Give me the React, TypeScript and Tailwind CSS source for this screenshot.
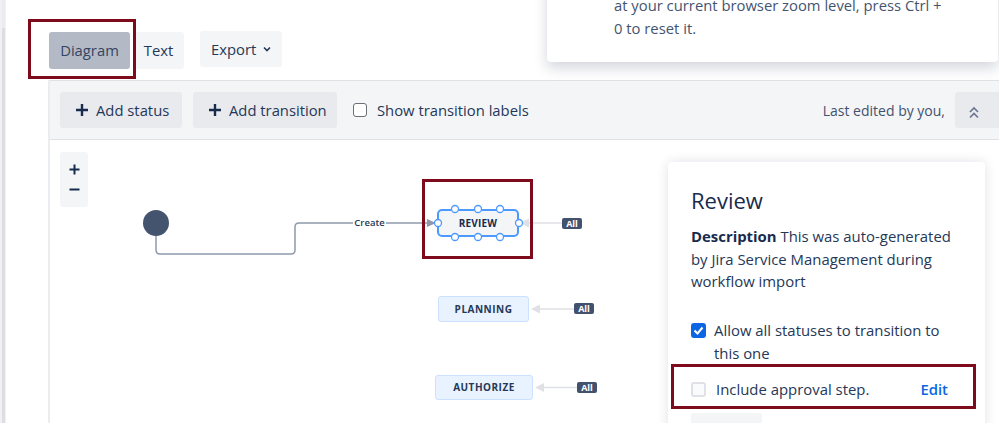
import React from "react";

const RED = "border-[#7d0b1b]";

function PlusIcon() {
  return (
    <svg width="12" height="12" viewBox="0 0 12 12" className="shrink-0">
      <path d="M6 1v10M1 6h10" stroke="#172b4d" strokeWidth="2.4" strokeLinecap="square" />
    </svg>
  );
}

function AllBadge({ left, top }: { left: number; top: number }) {
  return (
    <div
      className="absolute w-[20px] h-[11px] bg-[#42526e] rounded-[2px] text-white text-[9px] font-bold leading-[11px] text-center"
      style={{ left, top }}
    >
      All
    </div>
  );
}

export default function App() {
  return (
    <div
      className="w-[999px] h-[423px] relative overflow-hidden bg-white flex text-[#253858]"
      style={{ fontFamily: '"Open Sans", "Noto Sans", sans-serif' }}
    >
      {/* left scroll strip */}
      <div className="w-[6px] h-full bg-[#f1f1f3] flex pl-[2px]">
        <div className="w-[3px] h-full flex flex-col">
          <div className="h-[28px] bg-[#ececee]" />
          <div className="flex-1 bg-[#dedee2]" />
        </div>
      </div>

      <div className="flex-1 flex flex-col">
        {/* tab row */}
        <div className="h-[80px] flex items-start pl-[43px] pt-[31px]">
          <div className="flex mt-[1px] gap-[3px]">
            <div className="h-[37px] w-[81px] rounded-[3px] bg-[#b3bac5] flex items-center justify-center text-[14.8px] text-[#344563]">
              Diagram
            </div>
            <div className="h-[37px] w-[51px] rounded-[3px] bg-[#f4f5f7] flex items-center justify-center text-[14.8px] text-[#253858]">
              Text
            </div>
          </div>
          <div className="ml-[16px] h-[36px] w-[82px] rounded-[3px] bg-[#f4f5f7] flex items-center pl-[11px] gap-[7px] text-[14.8px] text-[#253858]">
            Export
            <svg width="8" height="6" viewBox="0 0 8 6">
              <path d="M1 1.5l3 3 3-3" stroke="#253858" strokeWidth="1.6" fill="none" />
            </svg>
          </div>
        </div>

        {/* workspace */}
        <div className="flex-1 ml-[42px] border-l-2 border-[#ebecf0] flex flex-col">
          {/* toolbar */}
          <div className="h-[60px] bg-[#f4f5f7] border-t border-b border-[#dfe1e6] flex items-center pl-[10px]">
            <div className="h-[36px] w-[122px] rounded-[3px] bg-[#e9eaee] flex items-center pl-[16px] gap-[8px] text-[14.8px] text-[#253858]">
              <PlusIcon />
              Add status
            </div>
            <div className="ml-[11px] h-[36px] w-[144px] rounded-[3px] bg-[#e9eaee] flex items-center pl-[16px] gap-[8px] text-[14.8px] text-[#253858]">
              <PlusIcon />
              Add transition
            </div>
            <div className="ml-[16px] w-[14px] h-[14px] rounded-[3px] border border-[#6b6f76] bg-white" />
            <div className="ml-[10px] text-[14.8px] text-[#253858]">Show transition labels</div>
            <div className="ml-auto text-[14px] text-[#42526e]">Last edited by you,</div>
            <div className="ml-[10px] h-[36px] w-[44px] rounded-l-[3px] bg-[#e9eaee] flex items-center pl-[14px] pt-[4px]">
              <svg width="10" height="13" viewBox="0 0 10 13">
                <path d="M1 6l4-4 4 4M1 11.5l4-4 4 4" stroke="#6b778c" strokeWidth="1.7" fill="none" />
              </svg>
            </div>
          </div>

          {/* canvas */}
          <div className="flex-1 relative">
            <svg className="absolute left-0 top-0" width="949" height="283">
              <circle cx="106" cy="83" r="13" fill="#44546f" />
              <path
                d="M106 96 V110 Q106 114 110 114 H241 Q245 114 245 110 V87 Q245 83 249 83 H303"
                stroke="#8f99ab"
                strokeWidth="1.5"
                fill="none"
              />
              <path d="M336 83 H379" stroke="#8f99ab" strokeWidth="1.5" />
              <polygon points="377,79 386,83 377,87" fill="#8f99ab" />
              <path d="M478 83 H512" stroke="#dfe1e6" strokeWidth="1.5" />
              <polygon points="479,78.5 470,83 479,87.5" fill="#dfe1e6" />
              <path d="M489 169 H524" stroke="#dfe1e6" strokeWidth="1.5" />
              <polygon points="490,164.5 481,169 490,173.5" fill="#dfe1e6" />
              <path d="M493 247.5 H527" stroke="#dfe1e6" strokeWidth="1.5" />
              <polygon points="494,243 485,247.5 494,252" fill="#dfe1e6" />
            </svg>
            <div className="absolute left-[304px] top-[77px] w-[31px] h-[12px] bg-white text-[9.5px] font-semibold leading-[12px] text-center text-[#253858]">
              Create
            </div>

            {/* nodes */}
            <div className="absolute left-[387px] top-[69px] w-[82px] h-[28px] bg-[#f4f5f7] border-2 border-[#4c9aff] rounded-[5px] flex items-center justify-center text-[10px] font-bold tracking-[0.2px] text-[#172b4d]">
              REVIEW
            </div>
            <div className="absolute left-[388px] top-[156px] w-[91px] h-[26px] bg-[#e9f2ff] border border-[#cce0ff] rounded-[3px] flex items-center justify-center text-[10px] font-bold tracking-[0.5px] text-[#253858]">
              PLANNING
            </div>
            <div className="absolute left-[385px] top-[235px] w-[98px] h-[25px] bg-[#e9f2ff] border border-[#cce0ff] rounded-[3px] flex items-center justify-center text-[10px] font-bold tracking-[0.5px] text-[#253858]">
              AUTHORIZE
            </div>
            <svg className="absolute left-0 top-0 pointer-events-none" width="949" height="283">
              {[
                [405, 69],
                [428, 69],
                [450, 69],
                [405, 97],
                [428, 97],
                [450, 97],
                [388, 83],
                [469, 83],
              ].map(([x, y], i) => (
                <circle key={i} cx={x} cy={y} r="3.5" fill="white" stroke="#4c9aff" strokeWidth="1.3" />
              ))}
            </svg>
            <AllBadge left={512} top={78} />
            <AllBadge left={524} top={163} />
            <AllBadge left={527} top={242} />

            {/* zoom controls */}
            <div className="absolute left-[10px] top-[12px] w-[28px] h-[55px] bg-[#f4f5f7] rounded-[3px] flex flex-col items-center pt-[12px] gap-[13px]">
              <svg width="11" height="11" viewBox="0 0 11 11">
                <path d="M5.5 0.5v10M0.5 5.5h10" stroke="#172b4d" strokeWidth="2" />
              </svg>
              <svg width="11" height="3" viewBox="0 0 11 3">
                <path d="M0.5 1.5h10" stroke="#172b4d" strokeWidth="2" />
              </svg>
            </div>

            {/* right panel */}
            <div className="absolute left-[618px] top-[22px] w-[317px] h-[300px] bg-white rounded-[4px] shadow-[0_0_12px_rgba(9,30,66,0.13)] pl-[23px] pt-[23px] pr-[16px]">
              <div className="text-[22px] leading-[30px] text-[#172b4d]">Review</div>
              <div className="mt-[10px] text-[14.9px] leading-[22.5px] text-[#253858]">
                <div>
                  <span className="font-bold text-[#172b4d]">Description</span> This was auto-generated
                </div>
                <div>by Jira Service Management during</div>
                <div>workflow import</div>
              </div>
              <div className="mt-[26px] flex items-start gap-[8px] text-[14.9px] leading-[23px] text-[#253858]">
                <div className="mt-[4.5px] w-[15px] h-[15px] rounded-[3px] bg-[#0c66e4] flex items-center justify-center shrink-0">
                  <svg width="11" height="9" viewBox="0 0 11 9">
                    <path d="M1.5 4.5l3 3 5-6" stroke="white" strokeWidth="2" fill="none" />
                  </svg>
                </div>
                <div>
                  Allow all statuses to transition to
                  <br />
                  this one
                </div>
              </div>
              <div className="mt-[13px] flex items-center text-[14.9px] leading-[23px] text-[#253858]">
                <div className="w-[15px] h-[15px] rounded-[3px] border-2 border-[#dfe1e6] bg-[#fafbfc] shrink-0" />
                <div className="ml-[10px]">Include approval step.</div>
                <div className="ml-auto mr-[21px] font-semibold text-[#0c66e4]">Edit</div>
              </div>
              <div className="mt-[12px] w-[71px] h-[32px] rounded-[3px] bg-[#f4f5f7]" />
            </div>
          </div>
        </div>
      </div>

      {/* top-right flag popup */}
      <div className="absolute left-[547px] top-[-40px] w-[451px] h-[102px] bg-white rounded-[4px] shadow-[0_6px_14px_rgba(9,30,66,0.18)] pl-[67px] pt-[34px] text-[14.8px] leading-[23px] text-[#44546f]">
        <div>at your current browser zoom level, press Ctrl +</div>
        <div>0 to reset it.</div>
      </div>

      {/* annotation boxes */}
      <div className={`absolute left-[28px] top-[19px] w-[108px] h-[60px] border-[3px] ${RED}`} />
      <div className={`absolute left-[422px] top-[179px] w-[111px] h-[80px] border-[3px] ${RED}`} />
      <div className={`absolute left-[671px] top-[364px] w-[305px] h-[45px] border-[3px] ${RED}`} />
    </div>
  );
}
